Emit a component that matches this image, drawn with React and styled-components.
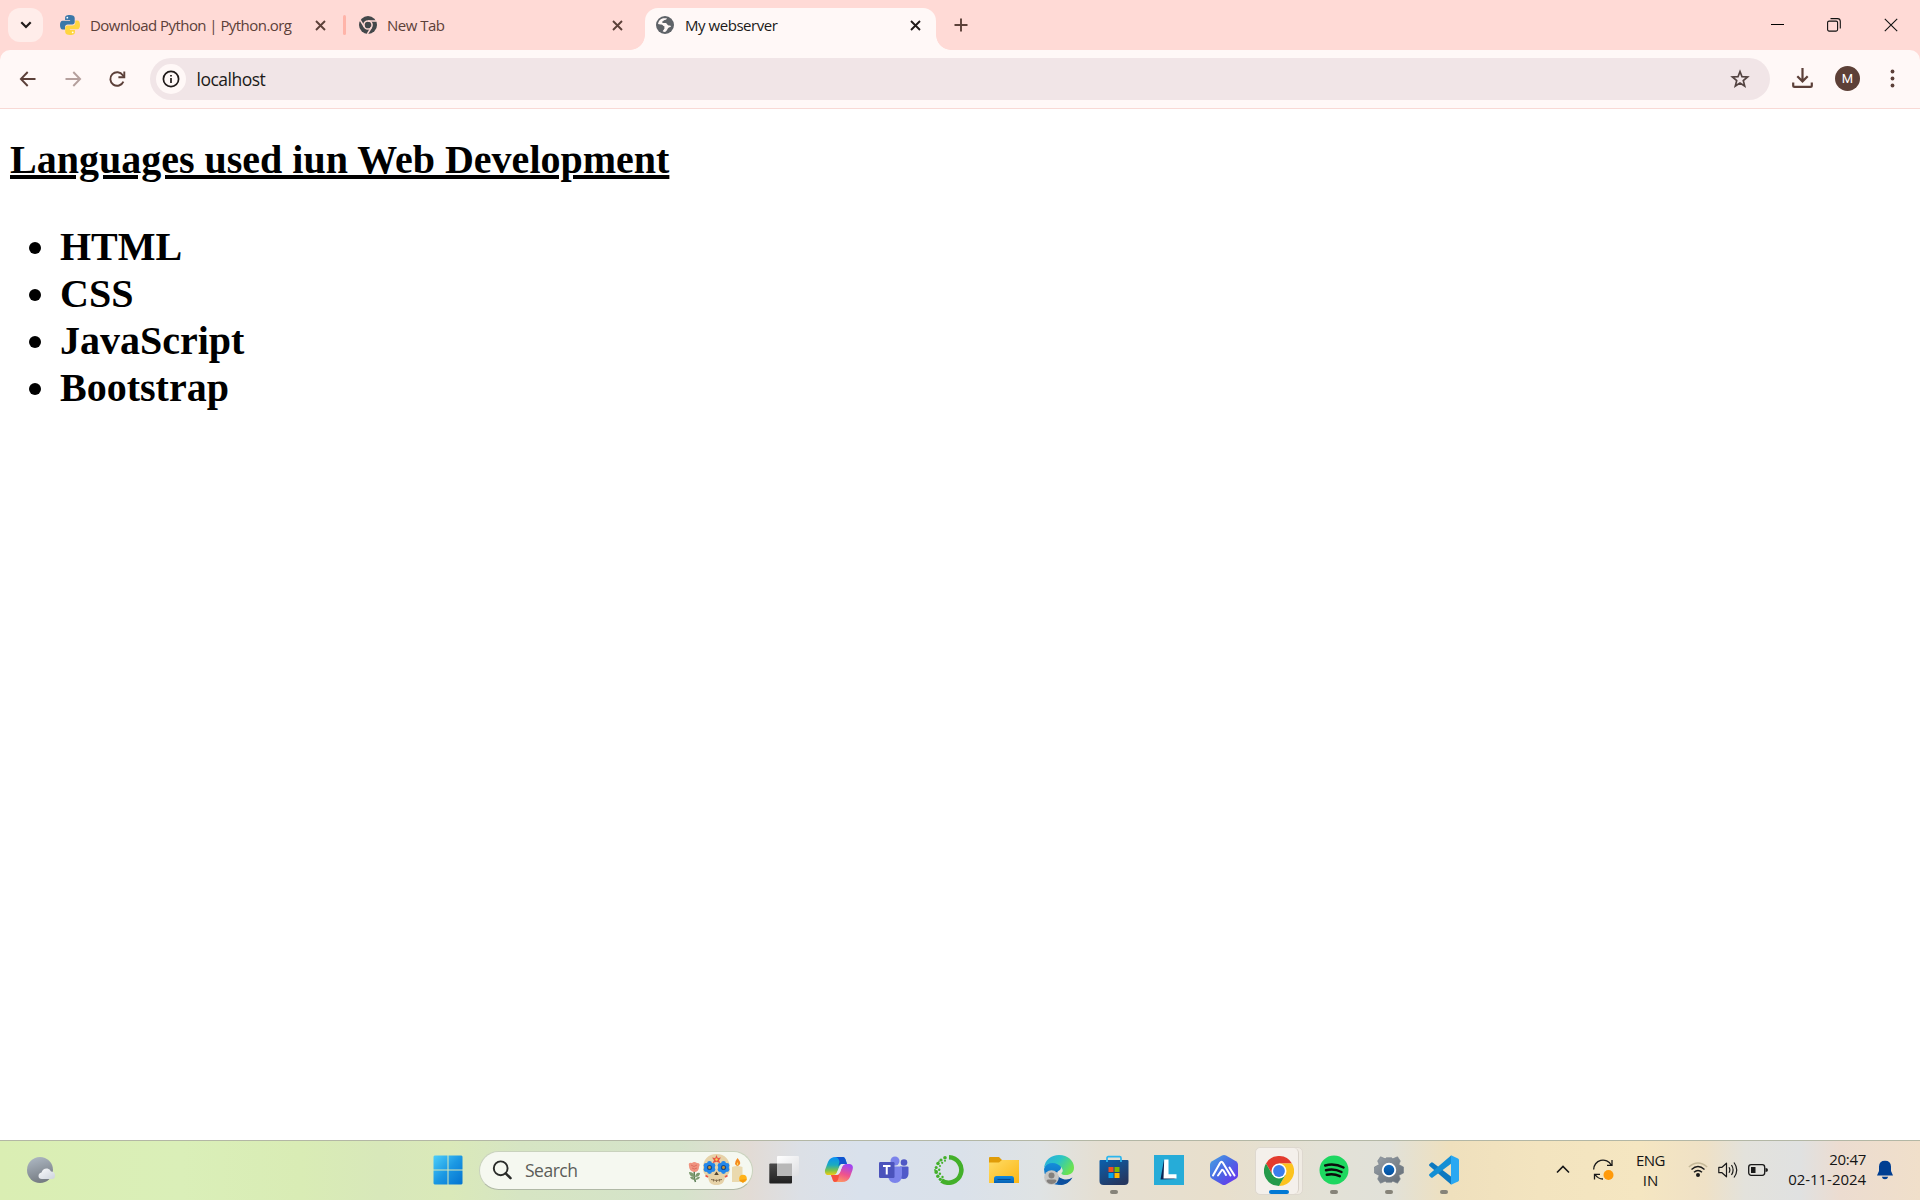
import React from "react";
import styled, { createGlobalStyle } from "styled-components";

const GlobalStyle = createGlobalStyle`
  * { box-sizing: border-box; }
  html, body { margin: 0; padding: 0; background: #fff; overflow: hidden; }
  svg { display: block; flex: none; }
`;

const Screen = styled.div`
  width: 1920px;
  height: 1200px;
  display: flex;
  flex-direction: column;
  background: #fff;
  font-family: "Open Sans", "Noto Sans", sans-serif;
  overflow: hidden;
`;

const Label = styled.span`
  font-size: ${(p) => p.$size || 15}px;
  letter-spacing: ${(p) => p.$track || 0}px;
  color: ${(p) => p.$color || "#5c4039"};
  line-height: 20px;
  white-space: nowrap;
`;

/* ---------- tab strip ---------- */
const TabStrip = styled.header`
  height: 50px;
  flex: none;
  display: flex;
  align-items: center;
  background: #ffdad6;
  padding-left: 8px;
`;

const TabSearch = styled.button`
  width: 35px;
  height: 34px;
  border: 0;
  padding: 0;
  border-radius: 12px;
  background: #ffedea;
  display: flex;
  align-items: center;
  justify-content: center;
`;

const Tab = styled.div`
  width: ${(p) => p.$width}px;
  height: 42px;
  padding: 0 ${(p) => p.$end}px 0 ${(p) => p.$start}px;
  display: flex;
  align-items: center;
  gap: ${(p) => p.$gap || 11}px;
`;

const ActiveTab = styled(Tab)`
  position: relative;
  align-self: flex-end;
  height: 42.5px;
  padding-bottom: 7.5px;
  background: #fff8f7;
  border-radius: 13px 13px 0 0;
  &::before, &::after {
    content: "";
    position: absolute;
    bottom: 0;
    width: 15px;
    height: 15px;
  }
  &::before {
    left: -15px;
    background: radial-gradient(circle at 0 0, transparent 14.5px, #fff8f7 15.2px);
  }
  &::after {
    right: -15px;
    background: radial-gradient(circle at 100% 0, transparent 14.5px, #fff8f7 15.2px);
  }
`;

const TabTitle = styled(Label)`
  flex: 1;
`;

const Separator = styled.i`
  width: 3px;
  height: 20px;
  border-radius: 2px;
  background: #ffb4a9;
`;

const NewTab = styled.div`
  margin-left: 18px;
`;

const WindowControls = styled.div`
  margin-left: auto;
  padding-right: 22px;
  display: flex;
  align-items: center;
  gap: 43px;
`;

/* ---------- toolbar ---------- */
const ToolbarBack = styled.div`
  flex: none;
  height: 59px;
  background: #ffdad6;
`;

const Toolbar = styled.nav`
  height: 59px;
  display: flex;
  align-items: center;
  padding: 0 25px 2px 18px;
  border-radius: 10px 10px 0 0;
  border-bottom: 1px solid #f8d9d5;
  background: #fff8f7;
`;

const NavButtons = styled.div`
  display: flex;
  gap: 24.5px;
  width: 132px;
  padding-top: 1px;
`;

const AddressBar = styled.div`
  width: 1620px;
  height: 42px;
  margin-top: 2px;
  border-radius: 21px;
  background: #f1e5e7;
  display: flex;
  align-items: center;
  padding: 0 20px 0 6px;
  gap: 10.5px;
`;

const SiteInfo = styled.div`
  width: 30px;
  height: 30px;
  border-radius: 50%;
  background: #fff8f7;
  display: flex;
  align-items: center;
  justify-content: center;
`;

const Url = styled(Label)`
  flex: 1;
`;

const Actions = styled.div`
  margin-left: auto;
  display: flex;
  align-items: center;
`;

const Avatar = styled.div`
  width: 25px;
  height: 25px;
  margin: 0 30px 0 22px;
  border-radius: 50%;
  background: #5d4037;
  color: #fff;
  font: 400 13px/25px Roboto, sans-serif;
  text-align: center;
`;

/* ---------- page ---------- */
const Page = styled.main`
  flex: 1;
  padding: 0 10px;
  font-family: "Liberation Serif", "Times New Roman", serif;
  font-weight: bold;
  font-size: 40px;
  line-height: 47px;
  color: #000;
`;

const Heading = styled.h1`
  margin: 27px 0 40px;
  font: inherit;
  text-decoration: underline;
  text-decoration-thickness: 4px;
  text-underline-offset: 2px;
`;

const List = styled.ul`
  margin: 0;
  padding-left: 50px;
`;

/* ---------- taskbar ---------- */
const Taskbar = styled.footer`
  height: 60px;
  flex: none;
  display: flex;
  align-items: stretch;
  border-top: 1px solid #b3b7a5;
  background: linear-gradient(90deg, #daeeb3 0, #daefb8 180px, #d9ecb5 300px, #d8e8ba 380px, #dae9b9 450px,
    #d6e5c3 520px, #d5e3ca 680px, #e2dbd5 750px, #dce0e6 800px, #d9e1ec 860px, #dae1ea 960px, #dfe3e4 1040px,
    #e5dfd2 1100px, #e8dfcc 1220px, #e3e1d6 1320px, #e1e1d9 1390px, #efe0bd 1450px, #f3e4bf 1540px,
    #f5e6c1 1640px, #efe1c6 1705px, #e3e2dc 1745px, #e0e1e1 1800px, #ecdcd0 1840px, #f0dfca 1920px);
`;

const Weather = styled.div`
  width: 420px;
  padding: 0 0 1px 26px;
  display: flex;
  align-items: center;
`;

const Slot = styled.div`
  width: ${(p) => p.$width || 55}px;
  display: grid;
  grid-template-rows: 9px 40px 10px;
  justify-items: center;
  align-items: center;
`;

const Indicator = styled.i`
  grid-row: 3;
  align-self: start;
  width: ${(p) => (p.$active ? 20 : 8)}px;
  height: 4px;
  border-radius: 2px;
  background: ${(p) => (p.$active ? "#0078d4" : "#868379")};
`;

const IconCell = styled.div`
  grid-row: 2;
`;

const ActiveTile = styled.div`
  grid-row: 2;
  width: 48px;
  height: 48px;
  margin-top: 1px;
  padding-right: 4px;
  border-radius: 5px;
  border: 1px solid #ded8cf;
  background: #f0ebe3;
`;

const ActiveTileFace = styled.div`
  width: 43px;
  height: 46px;
  border-radius: 5px;
  background: #f4f0eb;
  border-right: 1px solid #d8d2c9;
  display: flex;
  align-items: center;
  padding-left: 8px;
`;

const SearchBox = styled.div`
  width: 274px;
  height: 39px;
  margin: 9.5px 3px 0 4px;
  border-radius: 20px;
  border: 1px solid #c9d2bd;
  border-bottom-color: #b0b9a6;
  background: #f5f8f0;
  display: flex;
  align-items: center;
  padding: 0 4px 0 12px;
  gap: 13px;
`;

const Grow = styled(Label)`
  flex: 1;
`;

const Tray = styled.div`
  margin-left: auto;
  padding: 0 27px 2px 0;
  display: flex;
  align-items: center;
`;

const TrayText = styled.div`
  width: ${(p) => p.$width}px;
  margin: ${(p) => -(p.$lift || 0)}px ${(p) => p.$after}px 0 ${(p) => p.$before}px;
  display: flex;
  flex-direction: column;
  align-items: ${(p) => p.$align};
`;

const TrayIcons = styled.div`
  display: flex;
  gap: 10px;
`;

/* ---------- icons ---------- */
const Cross = ({ color = "#5c4039" }) => (
  <svg width="11" height="11" viewBox="0 0 11 11">
    <path d="M1 1L10 10M10 1L1 10" stroke={color} strokeWidth="1.9" />
  </svg>
);

const Python = () => (
  <svg width="20" height="20" viewBox="0 0 20 20">
    <path d="M9.900 0C6 0 5.100 1.300 5.100 3v2h5v.8H2.600C.9 5.800 0 7.500 0 10s.9 4.500 2.600 4.500H5v-2.300c0-1.600 1.200-2.700 2.700-2.700h4.600c1.400 0 2.400-1.100 2.400-2.500V3c0-1.900-1.700-3-4.800-3z" fill="#3b77a8" />
    <path d="M10.100 20c3.900 0 4.800-1.300 4.800-3v-2h-5v-.8h7.500C19.100 14.200 20 12.500 20 10s-.9-4.500-2.600-4.500H15.300v2.200c0 1.600-1.200 2.700-2.700 2.700H7.700c-1.400 0-2.500 1.100-2.500 2.500V17c0 1.900 1.800 3 4.900 3z" fill="#fed540" />
    <circle cx="7.300" cy="2.700" r=".9" fill="#fff" />
    <circle cx="12.700" cy="17.300" r=".9" fill="#fff" />
  </svg>
);

const GreyChrome = () => (
  <svg width="18" height="18" viewBox="0 0 18 18">
    <circle cx="9" cy="9" r="9" fill="#43474a" />
    <circle cx="9" cy="9" r="4.100" fill="#43474a" stroke="#ffdad6" strokeWidth="1.500" />
    <path d="M9 4.900H17.500M5.400 11L1.200 4.200M12.600 11L8.400 18" stroke="#ffdad6" strokeWidth="1.500" />
  </svg>
);

const Globe = () => (
  <svg width="18" height="18" viewBox="0 0 18 18">
    <circle cx="9" cy="9" r="9" fill="#5f6368" />
    <path d="M10.900 2.200C10.700 4 9 3.900 7.900 4.300 7.600 5.400 6.400 5 6 6.100c.2 1.200 2.400.8 3.800 1 1.300.4 1.300 1.700 2.300 2.100.9.300 2.300.1 2.900.9.300 1.200-2 .9-2.800 2-.9 1.300-1.500 3.300-3.200 3.800-1-.1-1.500-.3-2.500-.7.300-.9 1.500-1 1.500-1.900-.1-1.200-1.800-1-2.400-2-.3-.9.200-1.400-.4-2.100L2 8c.4-3 2.200-5 5.100-5.700z" fill="#fff8f7" />
    <path d="M1.200 8.500h4c1.500 0 1.800 1.700 3.200 1.700V13H6.900v2.600C3.500 15 1.300 12.300 1.200 8.500z" fill="#5f6368" />
  </svg>
);

const BackArrow = ({ color, flip }) => (
  <svg width="20" height="20" viewBox="0 0 20 20">
    <path d={flip ? "M2.500 10H17M10.300 3L17.100 10L10.300 17" : "M17.500 10H3M9.700 3L2.900 10L9.700 17"} fill="none" stroke={color} strokeWidth="1.900" />
  </svg>
);

const Reload = () => (
  <svg width="20" height="20" viewBox="0 0 20 20">
    <path d="M16.400 12.700A6.800 6.800 0 1 1 15.800 6.200L16.900 7.600" fill="none" stroke="#5c4039" strokeWidth="1.900" />
    <path d="M17.300 2.500V8.300H11.400" fill="none" stroke="#5c4039" strokeWidth="1.900" />
  </svg>
);

const Start = () => (
  <svg width="30" height="30" viewBox="0 0 30 30">
    <defs>
      <linearGradient id="win" x1="0" y1="0" x2="30" y2="30" gradientUnits="userSpaceOnUse">
        <stop offset="0" stopColor="#4fd0fa" /><stop offset=".5" stopColor="#1b98e3" /><stop offset="1" stopColor="#0271cf" />
      </linearGradient>
    </defs>
    <path fill="url(#win)" d="M1.500.5H14.500V14.500H.5V1.500zM15.500.5H28.500L29.500 1.500V14.500H15.500zM.5 15.500H14.500V29.500H1.500L.5 28.500zM15.500 15.500H29.500V28.500L28.500 29.500H15.500z" />
  </svg>
);

const petals = [30, 90, 150, 210, 270, 330].map((a) => [
  4 * Math.cos((a * Math.PI) / 180),
  4 * Math.sin((a * Math.PI) / 180),
]);

const EyeFlower = ({ x, y }) => (
  <g>
    <circle cx={x} cy={y} r="5" fill="#1a66bd" />
    {petals.map(([dx, dy], i) => (
      <circle key={i} cx={x + dx} cy={y + dy} r="2.400" fill="#2387ea" />
    ))}
    <circle cx={x} cy={y} r="2.600" fill="#174b8c" />
    <circle cx={x} cy={y} r="1.400" fill="#c9922f" />
  </g>
);

const Festive = () => (
  <svg width="60" height="34" viewBox="0 0 60 34">
    <path d="M6.500 17Q5.500 24 7.500 29" stroke="#5b7d55" strokeWidth="1.500" fill="none" />
    <path d="M7 24Q1 24 1 19Q6 19 7 24Q8 19 12 20Q12 24 7 24M7 27Q3 27 2 24Q6 23 7 27Q9 23 12 24Q11 27 7 27" fill="#7d9a6f" />
    <path d="M1 13Q0 9 4 10Q6 8 9 10Q13 10 11 14Q11 19 6 19Q1 18 1 13z" fill="#f0937f" />
    <path d="M3 12Q6 15 9 12M4 15Q6 17 9 15" stroke="#dd6f60" fill="none" />
    <path d="M28.500 1C37 1 42 7 42 15c0 5-2 7-5 9-1 6-3 8-8.500 8s-7.500-2-8.500-8c-3-2-5-4-5-9C15 7 20 1 28.500 1z" fill="#e6d2a8" />
    <EyeFlower x={21.500} y={14.500} />
    <EyeFlower x={35.500} y={14.500} />
    <path d="M28.500 2L29.800 5L33 4.500L31 7.200L32.500 10.300L28.500 8.800L24.500 10.300L26 7.200L24 4.500L27.200 5z" fill="#e75545" />
    <circle cx="28.500" cy="6.500" r="1.200" fill="#ffd24f" />
    <path d="M28.500 18.500L30.800 22H26.200z" fill="#54442e" />
    <path d="M23 26.500Q28.500 28.500 34 26.500M25.500 26v2.500M28.500 26.500v2.500M31.500 26v2.500" stroke="#8a7453" fill="none" />
    <path d="M17.500 22.500L20 24M39.500 22.500L37 24" stroke="#e75545" strokeWidth="1.700" />
    <path d="M44 14Q49 12 54.500 14V29H44z" fill="#ead9ae" />
    <path d="M49.500 5Q53 9 52 11Q49.500 15 47 11Q47 8 49.500 5z" fill="#f58a1f" />
    <path d="M49.500 9Q51 11 49.500 12.500Q48 11 49.500 9z" fill="#ffdd58" />
    <circle cx="55" cy="25.500" r="3.800" fill="#ffb31a" /><path d="M51 27L59 26L55 30z" fill="#f59a0c" />
  </svg>
);

const TaskView = () => (
  <svg width="30" height="30" viewBox="0 0 30 30">
    <defs>
      <linearGradient id="tvd" x1="0" y1="0" x2="0" y2="1"><stop offset="0" stopColor="#4a4a4a" /><stop offset="1" stopColor="#202020" /></linearGradient>
      <linearGradient id="tvl" x1="0" y1="0" x2="1" y2="1"><stop offset="0" stopColor="#fff" /><stop offset="1" stopColor="#dedfe2" /></linearGradient>
    </defs>
    <rect x=".3" y="8.500" width="22.700" height="20" rx="1" fill="url(#tvd)" />
    <rect x="8" y="1" width="22" height="20" rx="1" fill="url(#tvl)" />
    <path d="M8 8.500H23V21H8z" fill="#b8b8b8" />
  </svg>
);

const Copilot = () => (
  <svg width="30" height="30" viewBox="0 0 30 30">
    <defs>
      <linearGradient id="cpa" x1="0" y1="0" x2="0" y2="1"><stop offset="0" stopColor="#0a8ff5" /><stop offset=".45" stopColor="#1cabc0" /><stop offset=".75" stopColor="#7fc24a" /><stop offset="1" stopColor="#f2cc10" /></linearGradient>
      <linearGradient id="cpb" x1=".6" y1="0" x2=".2" y2="1"><stop offset="0" stopColor="#a246f0" /><stop offset=".5" stopColor="#f0538c" /><stop offset="1" stopColor="#ffa25c" /></linearGradient>
    </defs>
    <path d="M12 2H19Q21 2 22 6L23 9H17L12 19Q11 20 8 20H3Q.5 19 1 15L4 7Q6 2 12 2z" fill="url(#cpa)" />
    <path d="M12 2H19Q21 2 22 6L23 9H18Q15 9 14 12L15.500 7Q15 3 12 2z" fill="#1054cf" />
    <path d="M18 27H11Q9 27 8.500 24L7 20H12Q15 20 16 17L18 12Q19 9 22 9H26Q30 10 28.500 15L26 22Q24 27 18 27z" fill="url(#cpb)" />
    <path d="M7 20H12Q15 20 16 17L14 25Q13 27 11 27Q9 27 8.500 24z" fill="#f7503f" />
    <path d="M12.500 19L15.500 11Q16.500 9 18.500 9H21Q19 10 18 12L16 17.500Q15 20 12 20z" fill="#e3e7f1" />
  </svg>
);

const Teams = () => (
  <svg width="30" height="30" viewBox="0 0 30 30">
    <circle cx="25" cy="7.500" r="3.300" fill="#4f57c5" />
    <path d="M21 11.500H28.500Q29.500 11.500 29.500 12.500V19Q29 24 24.500 24Q22 24 21 23z" fill="#5059c9" />
    <circle cx="16" cy="6" r="4.500" fill="#7b83eb" />
    <path d="M9 11.500H22Q23 11.500 23 13V20Q22.500 28 16 28Q10 28 9 21z" fill="#7b83eb" />
    <rect x="0" y="7" width="15.500" height="16" rx="1.200" fill="#4b53bc" />
    <path d="M4 11H11.500M7.750 11V19.500" stroke="#fff" strokeWidth="2" />
  </svg>
);

const Anaconda = () => (
  <svg width="30" height="30" viewBox="0 0 30 30">
    <path d="M15 2.300A12.700 12.700 0 1 1 7.500 25.500" fill="none" stroke="#43b02a" strokeWidth="4.600" />
    <g fill="#43b02a">
      {[[11, 2.700, 1.800], [7, 5, 1.600], [4, 8.500, 1.800], [2.200, 12.500, 1.500], [2.200, 17, 1.900], [3.800, 21.300, 1.700], [6.300, 24.300, 1.600], [11, 5.800, 1], [8.200, 7.800, 1.100], [6, 11, 1], [5.200, 14.700, 1.200], [5.900, 18.700, 1.200], [1, 15, .9], [5, 6.200, .8], [8.500, 22, 1.200]].map(([x, y, r]) => (
        <circle key={x + "," + y} cx={x} cy={y} r={r} />
      ))}
    </g>
  </svg>
);

const Explorer = () => (
  <svg width="30" height="30" viewBox="0 0 30 30">
    <defs>
      <linearGradient id="fol" x1="0" y1="0" x2="1" y2="1"><stop offset="0" stopColor="#ffdc66" /><stop offset="1" stopColor="#fbb614" /></linearGradient>
      <linearGradient id="folb" x1="0" y1="0" x2="0" y2="1"><stop offset="0" stopColor="#1389dd" /><stop offset="1" stopColor="#0561b4" /></linearGradient>
    </defs>
    <path d="M0 3Q0 2 1 2H10L13 5H29Q30 5 30 6V14H0z" fill="#e09c08" />
    <path d="M0 7.500H10L13 5H29Q30 5 30 6V28H0z" fill="url(#fol)" />
    <path d="M5 28V23.500Q5 21 7.500 21H22.500Q25 21 25 23.500V28z" fill="url(#folb)" />
    <path d="M8.500 24.500H21.500" stroke="#064b91" />
  </svg>
);

const Edge = () => (
  <svg width="30" height="30" viewBox="0 0 30 30">
    <defs>
      <linearGradient id="eg1" x1="0" y1="0" x2="1" y2=".5"><stop offset="0" stopColor="#2ba9e0" /><stop offset=".5" stopColor="#29c4c7" /><stop offset="1" stopColor="#6be252" /></linearGradient>
      <linearGradient id="eg2" x1="0" y1="0" x2="0" y2="1"><stop offset="0" stopColor="#158fdb" /><stop offset="1" stopColor="#0b62b8" /></linearGradient>
    </defs>
    <path d="M0 14Q2 7 9 7C16 7 19 12 16 15Q13 16 13 19Q13 25 20 26Q25 26 28 23Q24 30 15 30Q1 29 0 14z" fill="url(#eg2)" />
    <path d="M9 17Q8 27 17 30Q25 29 28.500 22.500Q24 25.500 19 24Q12 22 12.500 16z" fill="#0c4f9e" />
    <path d="M0 13C1 5 7 0 15 0C24 0 30 6 30 12.500C30 18 26 20 22 20Q17 20 17.500 18Q20 16 17.500 12.500Q14 8 8.500 8Q3 8 0 13z" fill="url(#eg1)" />
    <circle cx="7.500" cy="22.500" r="7.300" fill="#c5c5c3" />
    <circle cx="7.500" cy="20.500" r="3" fill="#83807d" />
    <path d="M2.500 26Q2.500 24.500 4 24.500H11Q12.500 24.500 12.500 26Q11 29 7.500 29Q4 29 2.500 26z" fill="#83807d" />
  </svg>
);

const Store = () => (
  <svg width="30" height="30" viewBox="0 0 30 30">
    <defs>
      <linearGradient id="st" x1="0" y1="0" x2=".6" y2="1"><stop offset="0" stopColor="#0a60ae" /><stop offset="1" stopColor="#253760" /></linearGradient>
    </defs>
    <path d="M.5 6Q.5 5 1.500 5H28.500Q29.500 5 29.500 6V26Q29.500 30 25.500 30H4.500Q.5 30 .5 26z" fill="url(#st)" />
    <path d="M8 7V3Q8 1.700 9.300 1.700H20.700Q22 1.700 22 3V7" fill="none" stroke="#2cb6ee" strokeWidth="1.700" />
    <path d="M9.500 12h5v5h-5z" fill="#f25022" /><path d="M15.500 12h5v5h-5z" fill="#7fba00" />
    <path d="M9.500 18h5v5h-5z" fill="#00a4ef" /><path d="M15.500 18h5v5h-5z" fill="#ffb900" />
  </svg>
);

const LetterTile = () => (
  <svg width="30" height="30" viewBox="0 0 30 30">
    <path d="M0 0H30V30H0z" fill="#26acd8" />
    <path d="M10 4.500L6.500 24.500L22 24L13 20z" fill="#0a2554" />
    <path d="M10.200 4.500H14.500V19.300H22.500V23.500H9.500z" fill="#fff" />
  </svg>
);

const Hexagon = () => (
  <svg width="30" height="30" viewBox="0 0 30 30">
    <defs>
      <linearGradient id="hx" x1="0" y1="0" x2="1" y2="1"><stop offset="0" stopColor="#46a3e2" /><stop offset=".5" stopColor="#4b66e4" /><stop offset="1" stopColor="#702df0" /></linearGradient>
    </defs>
    <path d="M13 .6Q15-.4 17 .6L27 6.200Q29 7.500 29 9.500V20.500Q29 22.500 27 23.800L17 29.400Q15 30.400 13 29.400L3 23.800Q1 22.500 1 20.500V9.500Q1 7.500 3 6.200z" fill="url(#hx)" />
    <path d="M4 20.500L11 8Q12.500 5.500 14 8L21.500 20.500M9 20.500L12.500 15.500Q13.500 14 14.700 16L17 20M20.500 12.500L25.500 20.500" stroke="#fff" strokeWidth="2" fill="none" strokeLinecap="round" />
  </svg>
);

const Chrome = () => (
  <svg width="30" height="30" viewBox="0 0 30 30">
    <path d="M2 7.500A15 15 0 0 1 28 7.500H15L8.500 18.750z" fill="#e33b2e" />
    <path d="M28 7.500A15 15 0 0 1 15 30L21.500 18.750L15 7.500z" fill="#fcc31e" />
    <path d="M2 7.500A15 15 0 0 0 15 30L21.500 18.750H8.500z" fill="#249a4a" />
    <circle cx="15" cy="15" r="7.500" fill="#fff" />
    <circle cx="15" cy="15" r="5.900" fill="#3b7ded" />
  </svg>
);

const Spotify = () => (
  <svg width="30" height="30" viewBox="0 0 30 30">
    <circle cx="15" cy="15" r="14.500" fill="#1ed760" />
    <path d="M6.200 10.500Q15.500 8 24.500 12.500M7 15.300Q15 13.200 22.500 17M7.800 19.800Q14.500 18.200 20.800 21.200" fill="none" stroke="#0c0c0c" strokeLinecap="round" strokeWidth="2.500" />
  </svg>
);

const Settings = () => (
  <svg width="30" height="30" viewBox="0 0 30 30">
    <defs>
      <linearGradient id="gr" x1="0" y1="0" x2="1" y2="1"><stop offset="0" stopColor="#98a0a8" /><stop offset="1" stopColor="#626b74" /></linearGradient>
      <linearGradient id="grb" x1="0" y1="0" x2="0" y2="1"><stop offset="0" stopColor="#0d6cc4" /><stop offset="1" stopColor="#054f9c" /></linearGradient>
    </defs>
    <path d="M6.500 1.800L11.200 3.800L12.300 2.800H17.700L18.800 3.800L23.500 1.800L26.300 6L24.800 9.600L29.500 12V18L24.800 20.400L26.300 24L23.500 28.200L18.800 26.200L17.700 27.200H12.300L11.200 26.200L6.500 28.200L3.700 24L5.200 20.400L.5 18V12L5.200 9.600L3.700 6z" fill="url(#gr)" strokeLinejoin="round" stroke="#7c858e" strokeWidth=".7" />
    <circle cx="15" cy="15" r="7.200" fill="#fff" />
    <circle cx="15" cy="15" r="5.300" fill="url(#grb)" />
  </svg>
);

const VSCode = () => (
  <svg width="30" height="30" viewBox="0 0 30 30">
    <path d="M2 7.700L.3 9.300Q-.3 10.200.5 11L22 29.500V21.500L4 7.800Q3 7 2 7.700z" fill="#0e79c0" />
    <path d="M2 22.500L.3 20.800Q-.3 20 .5 19L22 .5V8.700L4 22.300Q3 23.200 2 22.500z" fill="#148fd5" />
    <path d="M22 .2L29 3.500Q30 4 30 5V25Q30 26 29 26.500L22 29.800z" fill="#2aa8f2" />
  </svg>
);

const MoonCloud = () => (
  <svg width="30" height="28" viewBox="0 0 30 28">
    <defs>
      <linearGradient id="mn" x1=".3" y1="0" x2=".6" y2="1"><stop offset="0" stopColor="#acb6c1" /><stop offset="1" stopColor="#737980" /></linearGradient>
      <linearGradient id="cl" x1="0" y1="0" x2="1" y2="1"><stop offset="0" stopColor="#fafbfc" /><stop offset="1" stopColor="#cdd3dc" /></linearGradient>
    </defs>
    <circle cx="14" cy="14" r="13" fill="url(#mn)" />
    <path d="M16 23Q12.500 23 12.500 20Q12.500 17 15.500 16.500Q17 12 21.500 12.500Q24 13 25 15.500Q29 15.500 29 19.500Q29 23 26 23z" fill="url(#cl)" />
  </svg>
);

const apps = [
  { id: "copilot", icon: Copilot },
  { id: "teams", icon: Teams },
  { id: "anaconda", icon: Anaconda },
  { id: "explorer", icon: Explorer },
  { id: "edge", icon: Edge },
  { id: "store", icon: Store, running: true },
  { id: "letter", icon: LetterTile },
  { id: "hexagon", icon: Hexagon },
  { id: "chrome", icon: Chrome, running: true, active: true },
  { id: "spotify", icon: Spotify, running: true },
  { id: "settings", icon: Settings, running: true },
  { id: "vscode", icon: VSCode, running: true },
];

function TabBar() {
  return (
    <TabStrip>
      <TabSearch>
        <svg width="12" height="8" viewBox="0 0 12 8"><path d="M1.300 1.300L6 6L10.700 1.300" fill="none" stroke="#201a19" strokeWidth="2.200" /></svg>
      </TabSearch>
      <Tab $width={300} $start={17} $end={17.5} $gap={10}>
        <Python />
        <TabTitle $track={-0.55}>Download Python | Python.org</TabTitle>
        <Cross />
      </Tab>
      <Separator />
      <Tab $width={299} $start={13} $end={22.5} $gap={10}>
        <GreyChrome />
        <TabTitle $track={-0.5}>New Tab</TabTitle>
        <Cross />
      </Tab>
      <ActiveTab $width={290.5} $start={11} $end={15}>
        <Globe />
        <TabTitle $track={-0.45} $color="#201a19">My webserver</TabTitle>
        <Cross color="#201a19" />
      </ActiveTab>
      <NewTab>
        <svg width="14" height="14" viewBox="0 0 14 14"><path d="M7 .5V13.500M.5 7H13.500" stroke="#5c4039" strokeWidth="1.900" /></svg>
      </NewTab>
      <WindowControls>
        <svg width="13" height="13" viewBox="0 0 13 13"><path d="M0 5.500H13" stroke="#000" /></svg>
        <svg width="14" height="14" viewBox="0 0 14 14">
          <rect x=".6" y="3.100" width="10" height="10" rx="1.500" fill="none" stroke="#111" strokeWidth="1.100" />
          <path d="M3.500.6H10.500Q13.300.6 13.300 3.500V10.500" fill="none" stroke="#111" strokeWidth="1.100" />
        </svg>
        <svg width="14" height="14" viewBox="0 0 14 14"><path d="M.8.8L13.200 13.200M13.200.8L.8 13.200" stroke="#111" strokeWidth="1.100" /></svg>
      </WindowControls>
    </TabStrip>
  );
}

function BrowserToolbar() {
  return (
    <ToolbarBack>
      <Toolbar>
        <NavButtons>
          <BackArrow color="#5c4039" />
          <BackArrow color="#b5a09d" flip />
          <Reload />
        </NavButtons>
        <AddressBar>
          <SiteInfo>
            <svg width="18" height="18" viewBox="0 0 18 18">
              <circle cx="9" cy="9" r="7.600" fill="none" stroke="#201a19" strokeWidth="1.700" />
              <path d="M9 8V13M9 4.900V6.600" stroke="#201a19" strokeWidth="1.700" />
            </svg>
          </SiteInfo>
          <Url $size={17.5} $track={-0.5} $color="#201a19">localhost</Url>
          <svg width="20" height="20" viewBox="0 0 20 20">
            <path d="M10 2.500L12 7.700L17.600 8L13.300 11.600L14.700 17L10 14L5.300 17L6.700 11.600L2.400 8L8 7.700z" fill="none" stroke="#534341" strokeWidth="1.700" />
          </svg>
        </AddressBar>
        <Actions>
          <svg width="21" height="20" viewBox="0 0 21 20">
            <path d="M10.500 0V13M5.300 8.200L10.500 13.400L15.700 8.200M1.200 14.500V17.500Q1.200 18.900 2.600 18.900H18.400Q19.800 18.900 19.800 17.500V14.500" fill="none" stroke="#5c4039" strokeWidth="2.200" />
          </svg>
          <Avatar>M</Avatar>
          <svg width="5" height="20" viewBox="0 0 5 20">
            <g fill="#5c4039"><circle cx="2.500" cy="3.500" r="1.900" /><circle cx="2.500" cy="10.500" r="1.900" /><circle cx="2.500" cy="17.500" r="1.900" /></g>
          </svg>
        </Actions>
      </Toolbar>
    </ToolbarBack>
  );
}

function SystemTray() {
  return (
    <Tray>
      <svg width="14" height="9" viewBox="0 0 14 9"><path d="M1 7.500L7 1.500L13 7.500" fill="none" stroke="#161616" strokeWidth="1.600" /></svg>
      <TrayText $width={21} $before={22.5} $after={0}>
        <svg width="21" height="22" viewBox="0 0 21 22">
          <path d="M.7 10.500A9.300 9.300 0 0 1 18.200 6M19 1V6.300H14M10 20Q5 20 2 15.500M1.500 20.500V15.300H7" fill="none" stroke="#1a1a1a" strokeWidth="1.300" />
          <circle cx="15.500" cy="16" r="5" fill="#ff9a0a" />
        </svg>
      </TrayText>
      <TrayText $width={29} $before={22.5} $after={23} $align="center">
        <Label $track={-0.5} $color="#151515">ENG</Label>
        <Label $color="#151515">IN</Label>
      </TrayText>
      <TrayIcons>
        <svg width="20" height="20" viewBox="0 0 20 20">
          <path d="M.8 7Q10-1 19.200 7" fill="none" stroke="#c5b999" strokeWidth="1.300" />
          <path d="M3.500 9.500Q10 3.500 16.500 9.500M6 12.300Q10 8.500 14 12.300" fill="none" stroke="#191919" strokeWidth="1.400" />
          <circle cx="10" cy="15" r="2" fill="#191919" />
        </svg>
        <svg width="20" height="20" viewBox="0 0 20 20">
          <path d="M.8 7.300H4L8.500 3.200V16.800L4 12.700H.8zM11 7.300Q12.700 10 11 12.700M13.500 5Q16.700 10 13.500 15M16 2.500Q21.500 10 16 17.500" fill="none" stroke="#191919" strokeWidth="1.200" strokeLinejoin="round" />
        </svg>
        <svg width="20" height="20" viewBox="0 0 20 20">
          <rect x=".7" y="4.700" width="16" height="10.600" rx="2.500" fill="none" stroke="#191919" strokeWidth="1.300" />
          <rect x="3" y="7" width="4.500" height="6" fill="#191919" />
          <path d="M17.500 8Q20 8 20 10Q20 12 17.500 12z" fill="#191919" />
        </svg>
      </TrayIcons>
      <TrayText $width={79} $before={19} $after={11} $align="flex-end" $lift={2}>
        <Label $track={-0.3} $color="#151515">20:47</Label>
        <Label $track={-0.05} $color="#151515">02-11-2024</Label>
      </TrayText>
      <svg width="16" height="20" viewBox="0 0 16 20">
        <path d="M8 .7Q13.800.7 14 6.500V11L16 15.500H0L2 11V6.500Q2.200.7 8 .7zM4.800 16.700H11.200Q10.500 19.200 8 19.200Q5.500 19.200 4.800 16.700z" fill="#003e92" />
      </svg>
    </Tray>
  );
}

function DesktopTaskbar() {
  return (
    <Taskbar>
      <Weather><MoonCloud /></Weather>
      <Slot><IconCell><Start /></IconCell></Slot>
      <SearchBox>
        <svg width="20" height="20" viewBox="0 0 20 20">
          <circle cx="8.700" cy="8.300" r="6.900" fill="none" stroke="#292b29" strokeWidth="1.900" />
          <path d="M13.700 13.300L18.500 18.200" stroke="#292b29" strokeWidth="2.500" strokeLinecap="round" />
        </svg>
        <Grow $size={17.5} $color="#5b5d59" $track={-0.5}>Search</Grow>
        <Festive />
      </SearchBox>
      <Slot><IconCell><TaskView /></IconCell></Slot>
      {apps.map(({ id, icon: Icon, running, active }) => (
        <Slot key={id}>
          {active ? (
            <ActiveTile><ActiveTileFace><Icon /></ActiveTileFace></ActiveTile>
          ) : (
            <IconCell><Icon /></IconCell>
          )}
          {running && <Indicator $active={active} />}
        </Slot>
      ))}
      <SystemTray />
    </Taskbar>
  );
}

export default function App() {
  return (
    <>
      <GlobalStyle />
      <Screen>
        <TabBar />
        <BrowserToolbar />
        <Page>
          <Heading>Languages used iun Web Development</Heading>
          <List>
            <li>HTML</li>
            <li>CSS</li>
            <li>JavaScript</li>
            <li>Bootstrap</li>
          </List>
        </Page>
        <DesktopTaskbar />
      </Screen>
    </>
  );
}
